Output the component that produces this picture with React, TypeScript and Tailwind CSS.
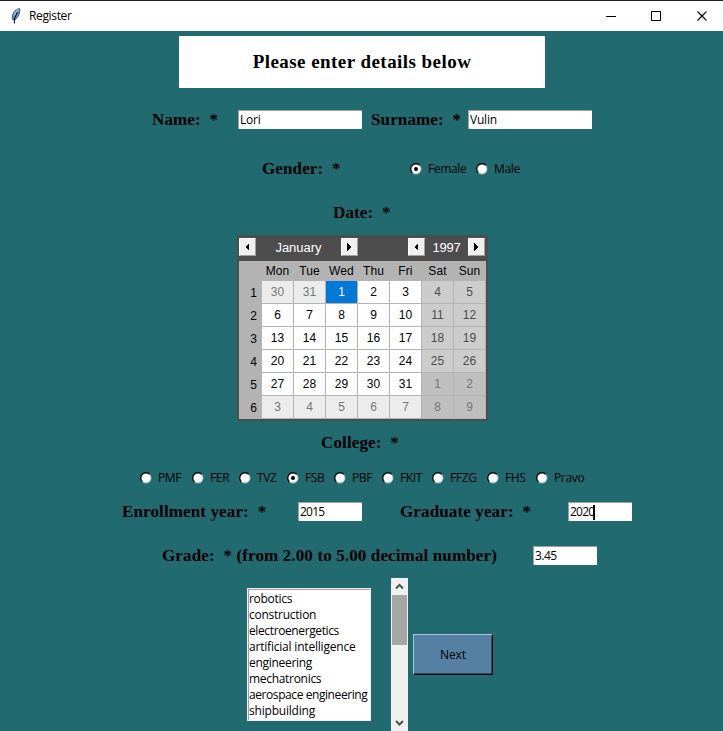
import type { ReactNode } from "react";

const SERIF = "font-['Liberation_Serif',serif] font-bold whitespace-pre text-black";
const UI = "font-['Open_Sans',sans-serif] text-[12px] whitespace-pre text-black";

function Label({ className = "", children }: { className?: string; children: ReactNode }) {
  return <span className={`${SERIF} shrink-0 text-[17px] leading-[20px] tracking-[0.13px] ${className}`}>{children}</span>;
}

function Field({ className, value, caret = false }: { className: string; value: string; caret?: boolean }) {
  return (
    <div className={`${UI} flex h-[19px] shrink-0 items-center border-t border-l border-[#a0a0a0] bg-white pl-px leading-[18px] ${className}`}>
      <span>{value}</span>
      {caret && <span className="-ml-px h-[15px] w-[2px] bg-black" />}
    </div>
  );
}

function Radio({ className, label, on = false }: { className: string; label: string; on?: boolean }) {
  return (
    <div className={`${UI} flex shrink-0 items-center gap-[6px] leading-[16px] tracking-[-0.35px] ${className}`}>
      <svg width="12" height="12" viewBox="0 0 12 12" className="mb-px shrink-0">
        <circle cx="6" cy="6" r="5.5" fill="#8db4b7" />
        <path d="M1.8 10.2A5.7 5.7 0 0 1 10.2 1.8Z" fill="#000" />
        <circle cx="6" cy="6" r="4.6" fill="#fff" />
        {on && <circle cx="6" cy="6" r="2" fill="#000" />}
      </svg>
      <span>{label}</span>
    </div>
  );
}

function Arrow({ right = false }: { right?: boolean }) {
  return (
    <div className="flex h-[18px] w-[17px] shrink-0 items-center border border-t-white border-r-[#a0a0a0] border-b-[#a0a0a0] border-l-white bg-[#f0f0f0] pl-[5px]">
      <svg width="4" height="8" viewBox="0 0 4 8" shapeRendering="crispEdges">
        <path d={right ? "M0 0L4 4L0 8Z" : "M4 0L0 4L4 8Z"} fill="#000" />
      </svg>
    </div>
  );
}

const weeks = [
  [30, 31, 1, 2, 3, 4, 5],
  [6, 7, 8, 9, 10, 11, 12],
  [13, 14, 15, 16, 17, 18, 19],
  [20, 21, 22, 23, 24, 25, 26],
  [27, 28, 29, 30, 31, 1, 2],
  [3, 4, 5, 6, 7, 8, 9],
];

function cellStyle(week: number, day: number) {
  if (week === 0 && day === 2) return "bg-[#0078d7] text-white";
  const other = (week === 0 && day < 2) || week === 5 || (week === 4 && day > 4);
  if (day > 4) return other ? "bg-[#bfbfbf] text-[#757575]" : "bg-[#cccccc] text-[#4d4d4d]";
  return other ? "bg-[#ececec] text-[#757575]" : "bg-white text-black";
}

function Calendar() {
  return (
    <div className="ml-[237px] h-[186px] w-[251px] bg-[#4d4d4d] px-[2px] font-['Liberation_Sans',sans-serif] text-[12px] text-black">
      <div className="flex h-[26px] items-start pt-[3px] text-[13px] leading-[19px] text-white">
        <Arrow />
        <span className="w-[85px] text-center">January</span>
        <Arrow right />
        <span className="w-[50px]" />
        <Arrow />
        <span className="w-[43px] text-center tracking-[-0.2px]">1997</span>
        <Arrow right />
      </div>
      <div className="h-[158px] bg-[#b3b3b3]">
        <div className="flex h-[20px] gap-px pl-[23px] leading-[20px]">
          {["Mon", "Tue", "Wed", "Thu", "Fri", "Sat", "Sun"].map((d) => (
            <span key={d} className="w-[31px] text-center tracking-[0.1px]">{d}</span>
          ))}
        </div>
        {weeks.map((days, w) => (
          <div key={w} className="flex h-[23px] gap-px leading-[22px]">
            <span className="w-[22px] pt-px pr-[4px] text-right">{w + 1}</span>
            {days.map((n, d) => (
              <span key={d} className={`h-[22px] w-[31px] text-center ${cellStyle(w, d)}`}>{n}</span>
            ))}
          </div>
        ))}
      </div>
    </div>
  );
}

const colleges: [string, string][] = [
  ["PMF", "w-[52px]"],
  ["FER", "w-[47px]"],
  ["TVZ", "w-[48px]"],
  ["FSB", "w-[47px]"],
  ["PBF", "w-[48px]"],
  ["FKIT", "w-[50px]"],
  ["FFZG", "w-[55px]"],
  ["FHS", "w-[49px]"],
  ["Pravo", "w-[60px]"],
];

const topics: [string, string][] = [
  ["robotics", "tracking-[-0.3px]"],
  ["construction", "tracking-[-0.25px]"],
  ["electroenergetics", "tracking-[-0.38px]"],
  ["artificial intelligence", "tracking-[-0.2px]"],
  ["engineering", "tracking-[-0.3px]"],
  ["mechatronics", "tracking-[-0.3px]"],
  ["aerospace engineering", "tracking-[-0.42px]"],
  ["shipbuilding", "tracking-[-0.2px]"],
];

function TitleBar() {
  return (
    <div className="flex h-[31px] items-center border-t border-[#20202a] bg-white pl-[10px]">
      <svg width="12" height="18" viewBox="0 0 12 18" className="shrink-0">
        <path d="M2.5 12.5C1.5 8 4 3 9.5 1.5C10.5 5 8.5 10 4.8 13Z" fill="#5b93d3" stroke="#3c4550" strokeWidth="0.9" />
        <path d="M8.5 2.5C6.5 4 5 6 4 8.5" stroke="#a9cdf2" strokeWidth="1.3" fill="none" />
        <path d="M7.5 5L4.6 11L4.3 16.5" stroke="#000" strokeWidth="1" fill="none" />
      </svg>
      <span className={`${UI} ml-[7px] w-[577px] leading-[16px] tracking-[-0.35px]`}>Register</span>
      <svg width="102" height="12" viewBox="0 0 102 12" fill="none" stroke="#000">
        <path d="M0 6.5H10" shapeRendering="crispEdges" />
        <rect x="45.5" y="1.5" width="9" height="9" shapeRendering="crispEdges" />
        <path d="M91.5 1.5L100.5 10.5M100.5 1.5L91.5 10.5" strokeWidth="1.1" />
      </svg>
    </div>
  );
}

export default function App() {
  return (
    <div className="h-[731px] w-[723px] overflow-hidden bg-[#206a70]">
      <TitleBar />
      <div className={`${SERIF} mt-[5px] ml-[179px] h-[52px] w-[366px] bg-white text-center text-[19px] leading-[52px] tracking-[0.45px]`}>
        Please enter details below
      </div>
      <div className="mt-[22px] flex h-[19px] items-center pl-[152px]">
        <Label className="w-[86px]">Name:  *</Label>
        <Field className="w-[124px] tracking-[-0.2px]" value="Lori" />
        <Label className="ml-[9px] w-[97px]">Surname:  *</Label>
        <Field className="w-[124px] tracking-[-0.2px]" value="Vulin" />
      </div>
      <div className="mt-[30px] flex h-[20px] items-center pl-[262px]">
        <Label className="w-[148px]">Gender:  *</Label>
        <Radio className="w-[66px]" label="Female" on />
        <Radio className="w-[60px]" label="Male" />
      </div>
      <div className="mt-[24px] flex h-[20px] items-center pl-[333px]">
        <Label>Date:  *</Label>
      </div>
      <div className="h-[12px]" />
      <Calendar />
      <div className="mt-[12px] flex h-[20px] items-center pl-[321px]">
        <Label>College:  *</Label>
      </div>
      <div className="mt-[15px] flex h-[20px] items-center pl-[140px]">
        {colleges.map(([name, width]) => (
          <Radio key={name} className={width} label={name} on={name === "FSB"} />
        ))}
      </div>
      <div className="mt-[14px] flex h-[19px] items-center pl-[122px]">
        <Label className="w-[176px]">Enrollment year:  *</Label>
        <Field className="w-[64px] tracking-[-0.75px]" value="2015" />
        <Label className="ml-[38px] w-[168px]">Graduate year:  *</Label>
        <Field className="w-[64px] tracking-[-0.75px]" value="2020" caret />
      </div>
      <div className="mt-[25px] flex h-[19px] items-center pl-[162px]">
        <Label className="w-[371px]">Grade:  * (from 2.00 to 5.00 decimal number)</Label>
        <Field className="w-[64px] tracking-[-0.55px]" value="3.45" />
      </div>
      <div className="mt-[13px] flex h-[153px] items-start pl-[247px]">
        <div className="mt-[10px] h-[133px] w-[124px] border border-[#f0f0f0] bg-white">
          <div className={`${UI} h-full border-t border-l border-[#a0a0a0] leading-[17px]`}>
            {topics.map(([t, tracking]) => (
              <div key={t} className={`h-[16px] ${tracking}`}>{t}</div>
            ))}
          </div>
        </div>
        <div className="ml-[20px] flex h-[153px] w-[17px] flex-col items-center bg-[#f0f0f0]">
          <svg width="17" height="17" viewBox="0 0 17 17" fill="none" stroke="#505050" strokeWidth="2">
            <path d="M5 10.5L8.5 7L12 10.5" />
          </svg>
          <div className="h-[50px] w-[15px] bg-[#a6a6a6]" />
          <svg width="17" height="17" viewBox="0 0 17 17" className="mt-[69px]" fill="none" stroke="#505050" strokeWidth="2">
            <path d="M5 7L8.5 10.5L12 7" />
          </svg>
        </div>
        <div className={`${UI} mt-[56px] ml-[5px] h-[41px] w-[80px] border border-t-[#a9c4e2] border-r-black border-b-black border-l-[#a9c4e2] bg-[#557fa3] text-center leading-[40px] tracking-[-0.1px] shadow-[inset_-1px_-1px_0_#2e4a63]`}>
          Next
        </div>
      </div>
    </div>
  );
}
